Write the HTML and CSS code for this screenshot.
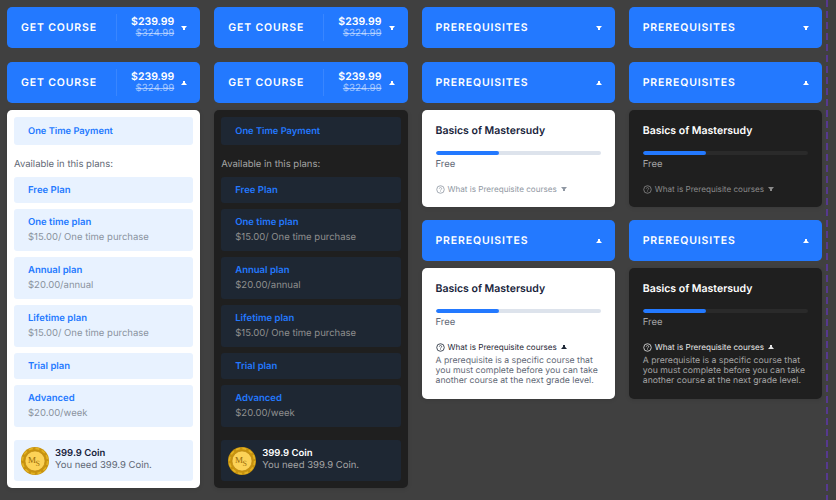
FILE: index.html
```html
<!DOCTYPE html>
<html lang="en">
<head>
<meta charset="utf-8">
<title>Course buttons</title>
<link rel="stylesheet" href="styles.css">
</head>
<body>
<svg class="defs" width="0" height="0" aria-hidden="true">
  <symbol id="down" viewBox="0 0 6 4"><path d="M0 0h6L4 2.2V4H2V2.2z" fill="currentColor"/></symbol>
  <symbol id="up" viewBox="0 0 6 4"><path d="M0 4h6L4 1.8V0H2v1.8z" fill="currentColor"/></symbol>
  <symbol id="q" viewBox="0 0 10 10"><circle cx="5" cy="5" r="4.2" fill="none" stroke="currentColor" stroke-width="0.9"/><path d="M3.7 4a1.3 1.3 0 1 1 2 1.1c-.5.3-.7.5-.7 1" fill="none" stroke="currentColor" stroke-width="0.8"/><circle cx="5" cy="7.4" r="0.5" fill="currentColor"/></symbol>
</svg>
<main class="board">
  <section class="col">
    <div class="btn"><span class="btn-title">GET COURSE</span><span class="price-box"><span class="price">$239.99<s>$324.99</s></span></span><svg class="caret"><use href="#down"/></svg></div>
    <div class="btn"><span class="btn-title">GET COURSE</span><span class="price-box"><span class="price">$239.99<s>$324.99</s></span></span><svg class="caret"><use href="#up"/></svg></div>
    <div class="panel plans">
      <div class="plan tall"><b>One Time Payment</b></div>
      <p class="avail">Available in this plans:</p>
      <div class="plan"><b>Free Plan</b></div>
      <div class="plan"><b>One time plan</b><span>$15.00/ One time purchase</span></div>
      <div class="plan"><b>Annual plan</b><span>$20.00/annual</span></div>
      <div class="plan"><b>Lifetime plan</b><span>$15.00/ One time purchase</span></div>
      <div class="plan"><b>Trial plan</b></div>
      <div class="plan"><b>Advanced</b><span>$20.00/week</span></div>
      <div class="coin-row">
        <svg class="coin" viewBox="0 0 28 28">
          <circle cx="14" cy="14" r="14" fill="#c8930f"/>
          <circle cx="14" cy="14" r="12.6" fill="none" stroke="#e3b323" stroke-width="1.6" stroke-dasharray="4 2.6"/>
          <circle cx="14" cy="14" r="10" fill="#fcd257"/>
          <circle cx="14" cy="14" r="10" fill="none" stroke="#b88512" stroke-width="0.6"/>
          <text x="7" y="15.5" class="coin-m">M</text>
          <text x="14.4" y="19" class="coin-s">S</text>
        </svg>
        <div class="coin-text"><strong>399.9 Coin</strong><span>You need 399.9 Coin.</span></div>
      </div>
    </div>
  </section>
  <section class="col dark">
    <div class="btn"><span class="btn-title">GET COURSE</span><span class="price-box"><span class="price">$239.99<s>$324.99</s></span></span><svg class="caret"><use href="#down"/></svg></div>
    <div class="btn"><span class="btn-title">GET COURSE</span><span class="price-box"><span class="price">$239.99<s>$324.99</s></span></span><svg class="caret"><use href="#up"/></svg></div>
    <div class="panel plans">
      <div class="plan tall"><b>One Time Payment</b></div>
      <p class="avail">Available in this plans:</p>
      <div class="plan"><b>Free Plan</b></div>
      <div class="plan"><b>One time plan</b><span>$15.00/ One time purchase</span></div>
      <div class="plan"><b>Annual plan</b><span>$20.00/annual</span></div>
      <div class="plan"><b>Lifetime plan</b><span>$15.00/ One time purchase</span></div>
      <div class="plan"><b>Trial plan</b></div>
      <div class="plan"><b>Advanced</b><span>$20.00/week</span></div>
      <div class="coin-row">
        <svg class="coin" viewBox="0 0 28 28">
          <circle cx="14" cy="14" r="14" fill="#c8930f"/>
          <circle cx="14" cy="14" r="12.6" fill="none" stroke="#e3b323" stroke-width="1.6" stroke-dasharray="4 2.6"/>
          <circle cx="14" cy="14" r="10" fill="#fcd257"/>
          <circle cx="14" cy="14" r="10" fill="none" stroke="#b88512" stroke-width="0.6"/>
          <text x="7" y="15.5" class="coin-m">M</text>
          <text x="14.4" y="19" class="coin-s">S</text>
        </svg>
        <div class="coin-text"><strong>399.9 Coin</strong><span>You need 399.9 Coin.</span></div>
      </div>
    </div>
  </section>
  <section class="col">
    <div class="btn pre"><span class="btn-title">PREREQUISITES</span><svg class="caret"><use href="#down"/></svg></div>
    <div class="btn pre"><span class="btn-title">PREREQUISITES</span><svg class="caret"><use href="#up"/></svg></div>
    <div class="panel course">
      <h3>Basics of Mastersudy</h3>
      <div class="bar"><i></i></div>
      <div class="free">Free</div>
      <div class="what"><svg class="q"><use href="#q"/></svg>What is Prerequisite courses<svg class="mini"><use href="#down"/></svg></div>
    </div>
    <div class="btn pre gap-top"><span class="btn-title">PREREQUISITES</span><svg class="caret"><use href="#up"/></svg></div>
    <div class="panel course open">
      <h3>Basics of Mastersudy</h3>
      <div class="bar"><i></i></div>
      <div class="free">Free</div>
      <div class="what"><svg class="q"><use href="#q"/></svg>What is Prerequisite courses<svg class="mini"><use href="#up"/></svg></div>
      <p class="desc">A prerequisite is a specific course that you must complete before you can take another course at the next grade level.</p>
    </div>
  </section>
  <section class="col dark">
    <div class="btn pre"><span class="btn-title">PREREQUISITES</span><svg class="caret"><use href="#down"/></svg></div>
    <div class="btn pre"><span class="btn-title">PREREQUISITES</span><svg class="caret"><use href="#up"/></svg></div>
    <div class="panel course">
      <h3>Basics of Mastersudy</h3>
      <div class="bar"><i></i></div>
      <div class="free">Free</div>
      <div class="what"><svg class="q"><use href="#q"/></svg>What is Prerequisite courses<svg class="mini"><use href="#down"/></svg></div>
    </div>
    <div class="btn pre gap-top"><span class="btn-title">PREREQUISITES</span><svg class="caret"><use href="#up"/></svg></div>
    <div class="panel course open">
      <h3>Basics of Mastersudy</h3>
      <div class="bar"><i></i></div>
      <div class="free">Free</div>
      <div class="what"><svg class="q"><use href="#q"/></svg>What is Prerequisite courses<svg class="mini"><use href="#up"/></svg></div>
      <p class="desc">A prerequisite is a specific course that you must complete before you can take another course at the next grade level.</p>
    </div>
  </section>
</main>
<div class="guide"></div>
</body>
</html>
```
FILE: styles.css
```css
* { box-sizing: border-box; }
html, body { margin: 0; height: 500px; overflow: hidden; }
body {
  background: #404040;
  font-family: Inter, "Open Sans", sans-serif;
  -webkit-font-smoothing: antialiased;
  text-rendering: geometricPrecision;
  position: relative;
}
.defs { position: absolute; }
.board {
  display: grid;
  grid-template-columns: repeat(4, 193.25px);
  column-gap: 14px;
  padding: 7px 0 0 7px;
  align-items: start;
}
.col { display: flex; flex-direction: column; }

.btn {
  height: 41px;
  margin-bottom: 14px;
  padding: 0 13px 0 14px;
  background: #2379ff;
  border-radius: 5px;
  color: #fff;
  display: flex;
  align-items: center;
}
.btn + .btn { margin-bottom: 7px; }
.btn.gap-top { margin-top: 13px; margin-bottom: 7px; }
.btn-title { font-size: 10.5px; font-weight: 600; letter-spacing: 0.85px; }
.pre .btn-title { flex: 1; }
.price-box {
  margin-left: auto;
  height: 27px;
  padding-left: 14px;
  border-left: 1px solid rgba(255,255,255,.1);
  display: flex;
  align-items: center;
}
.price { font-size: 10.5px; font-weight: 600; line-height: 13px; text-align: right; display: block; padding-bottom: 1px; }
.price s { display: block; font-size: 9.7px; font-weight: 400; line-height: 11px; color: rgba(255,255,255,.55); }
.caret { width: 6px; height: 4px; margin-left: 7px; color: #fff; flex: none; }
.pre .caret { margin-left: 0; }

.panel { background: #fff; border-radius: 5px; box-shadow: 0 1px 4px rgba(0,0,0,.12); }
.dark .panel { background: #1f1f1f; }

.plans { padding: 7px; height: 378px; }
.plan {
  background: #e8f2ff;
  border-radius: 3px;
  padding: 7px 14px 5px;
  margin-bottom: 6px;
  display: flex;
  flex-direction: column;
}
.dark .plan { background: #1e2733; }
.plan.tall { padding: 8px 14px 6px; margin-bottom: 0; }
.plan.tall b { font-size: 9.3px; }
.plan b { font-size: 9.5px; font-weight: 600; line-height: 14px; color: #2379ff; }
.plan span { font-size: 9.5px; line-height: 15px; margin-bottom: 1px; color: #8a929e; }
.dark .plan span { color: #8f8f8f; }
.avail { margin: 13px 0 5px; font-size: 9.5px; line-height: 14px; color: #5f6875; }
.dark .avail { color: #a5a5a5; }

.coin-row {
  margin-top: 13px;
  height: 41px;
  padding: 0 7px;
  background: #e8f2ff;
  border-radius: 3px;
  display: flex;
  align-items: center;
  gap: 6px;
}
.dark .coin-row { background: #1e2733; }
.coin { width: 28px; height: 28px; flex: none; }
.coin-m { font: 9px "Liberation Serif", serif; fill: #9a6c0a; }
.coin-s { font: 8px "Liberation Serif", serif; fill: #9a6c0a; }
.coin-text { display: flex; flex-direction: column; padding-bottom: 1px; }
.coin-text strong { font-size: 9.5px; font-weight: 600; line-height: 12px; color: #17233a; }
.coin-text span { font-size: 9.5px; line-height: 12px; color: #5f6875; }
.dark .coin-text strong { color: #fff; }
.dark .coin-text span { color: #a5a5a5; }

.course { padding: 14px; height: 97px; }
.course.open { height: 131px; }
.course h3 { margin: 0 0 13px; font-size: 10.5px; line-height: 14px; font-weight: 600; color: #17233a; }
.dark .course h3 { color: #fff; }
.bar { height: 4px; border-radius: 2px; background: #dde3ec; overflow: hidden; }
.dark .bar { background: #2a2a2a; }
.bar i { display: block; width: 38.5%; height: 100%; background: #2379ff; border-radius: 2px; }
.free { margin-top: 3px; font-size: 9.5px; line-height: 14px; color: #5f6875; }
.dark .free { color: #a5a5a5; }
.what {
  margin-top: 11px;
  display: flex;
  align-items: center;
  font-size: 8.1px;
  line-height: 12px;
  color: #9098a3;
}
.dark .what { color: #8a8a8a; }
.open .what { color: #1f2937; }
.dark .open .what { color: #e5e5e5; }
.q { width: 9px; height: 9px; margin-right: 3px; }
.mini { width: 6px; height: 4px; margin-left: 4px; }
.desc { margin: 3px 0 0; font-size: 8.7px; line-height: 10px; color: #5f6875; }
.dark .desc { color: #a5a5a5; }

.guide {
  position: absolute;
  top: 0;
  bottom: 0;
  left: 826px;
  width: 2px;
  background: repeating-linear-gradient(to bottom, #56398f 0 7px, transparent 7px 11px);
}
```
